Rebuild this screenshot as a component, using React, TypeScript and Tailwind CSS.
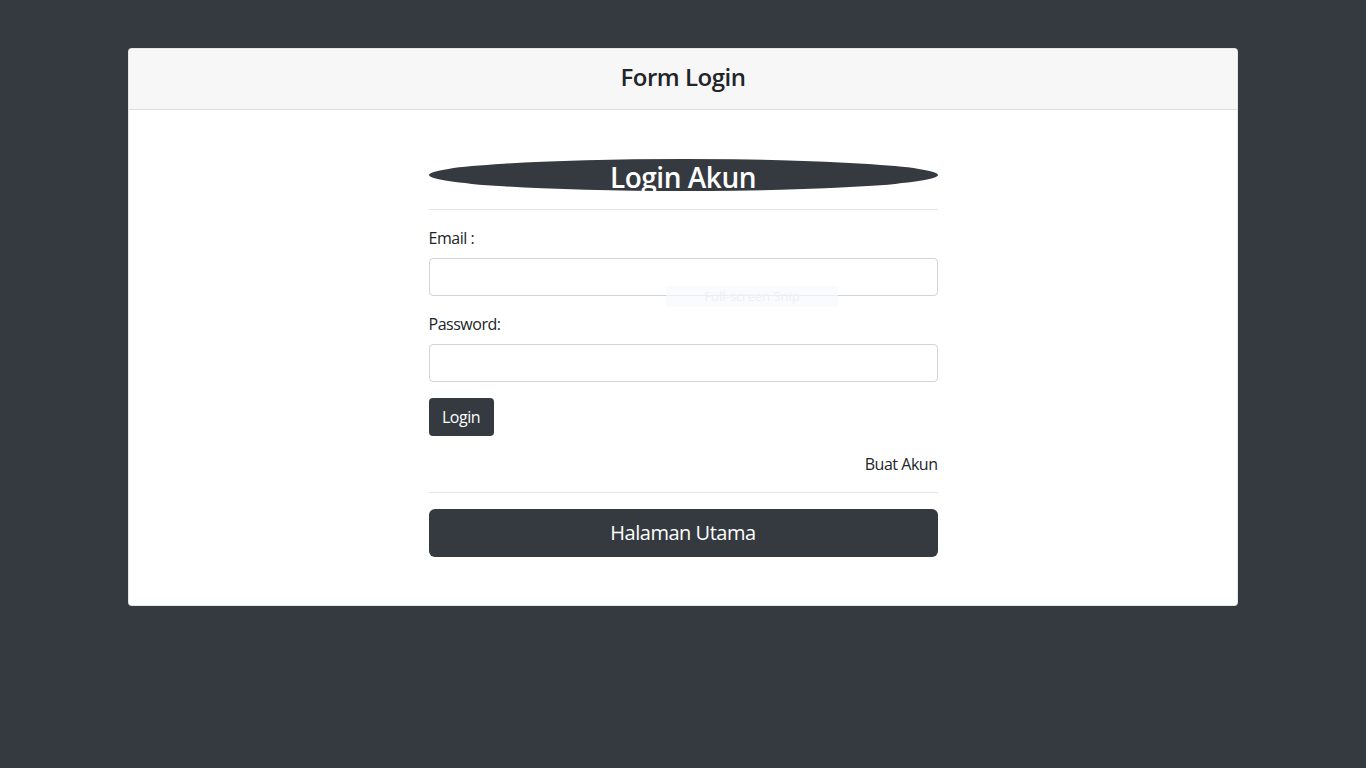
import React from 'react';

const font = { fontFamily: '"Segoe UI", "Open Sans", "Noto Sans", sans-serif' };

function Field({ label, type }: { label: string; type: string }) {
  return (
    <div className="mb-4">
      <label className="block mb-2 text-[16px] leading-6 text-[#212529]">{label}</label>
      <input
        type={type}
        className="block w-full h-[38px] px-3 border border-[#ced4da] rounded bg-white text-[16px] outline-none"
      />
    </div>
  );
}

export default function App() {
  return (
    <div className="relative min-h-[768px] bg-[#343a40] pt-12" style={font}>
      <div className="w-[1110px] mx-auto bg-white rounded border border-black/10">
        {/* Header */}
        <div className="h-[61px] bg-[#f7f7f7] border-b border-black/10 rounded-t flex items-center justify-center">
          <h4 className="text-[24px] font-semibold text-[#212529] leading-none tracking-[-0.02em] pb-[4px]">Form Login</h4>
        </div>

        {/* Body */}
        <div className="pt-[49px] pb-[48px] tracking-[-0.03em]">
          <div className="w-[509px] mx-auto">
            <div className="h-[32px] bg-[#343a40] rounded-[50%] flex items-center justify-center">
              <h3 className="text-[28px] font-semibold text-white leading-none pt-[4px]">Login Akun</h3>
            </div>
            <hr className="mt-[18px] mb-4 border-t border-black/10" />

            <form onSubmit={(e) => e.preventDefault()}>
              <Field label="Email :" type="email" />
              <Field label="Password:" type="password" />
              <button
                type="submit"
                className="h-[38px] w-[65px] rounded bg-[#343a40] text-white text-[16px]"
              >
                Login
              </button>
            </form>

            <p className="mt-4 text-right text-[16px] leading-6 text-[#212529]">Buat Akun</p>
            <hr className="my-4 border-t border-black/10" />

            <button className="w-full h-[48px] rounded-md bg-[#343a40] text-white text-[20px]">
              Halaman Utama
            </button>
          </div>
        </div>
      </div>

      {/* faint snipping-tool label */}
      <div className="absolute left-[666px] top-[286px] w-[172px] h-[21px] bg-[#f7f9fc]/70 flex items-center justify-center text-[13px] text-[#eef0f3]">
        Full-screen Snip
      </div>
    </div>
  );
}
